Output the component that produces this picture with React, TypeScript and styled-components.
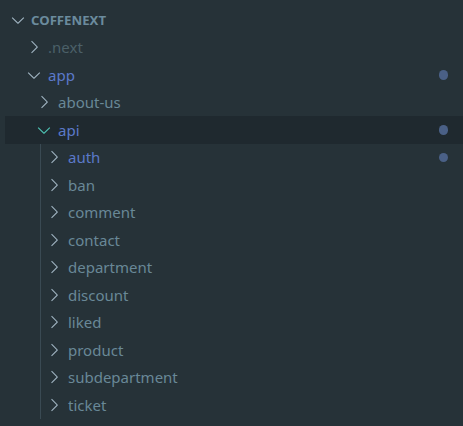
import React from "react";
import styled, { createGlobalStyle } from "styled-components";

const Global = createGlobalStyle`
  html, body { margin: 0; padding: 0; background: #263238; }
  body { width: 463px; height: 426px; overflow: hidden; }
`;

const Explorer = styled.div`
  box-sizing: border-box;
  width: 463px;
  height: 426px;
  background: #263238;
  padding-top: 6px;
  padding-left: 5px;
  font-family: "Noto Sans", "Open Sans", sans-serif;
`;

type Tone = "normal" | "modified" | "ignored";

const Row = styled.div<{ $depth: number; $selected?: boolean }>`
  position: relative;
  display: flex;
  align-items: center;
  height: 27.5px;
  padding-left: ${(p) => (p.$depth === 0 ? 3 : 9 + p.$depth * 10)}px;
  background: ${(p) => (p.$selected ? "#1f292f" : "transparent")};
`;

const Chevron = styled.span<{ $focus?: boolean }>`
  display: flex;
  width: 20px;
  height: 20px;
  flex: none;
  color: ${(p) => (p.$focus ? "#4ec3b4" : "#9fb3c0")};
`;

const Label = styled.span<{ $tone: Tone }>`
  margin-left: 4px;
  padding-top: 1px;
  font-size: 15px;
  line-height: 1;
  white-space: nowrap;
  color: ${(p) =>
    p.$tone === "modified" ? "#5b79c9" : p.$tone === "ignored" ? "#4b6068" : "#698897"};
`;

const Header = styled.span`
  margin-left: 3px;
  padding-top: 1px;
  font-size: 13.2px;
  font-weight: 700;
  color: #6b8b9d;
`;

const Dot = styled.span`
  position: absolute;
  right: 15px;
  top: 50%;
  width: 9.5px;
  height: 9.5px;
  margin-top: -4.75px;
  border-radius: 50%;
  background: #4a6086;
`;

const Group = styled.div<{ $guide: number }>`
  position: relative;
  &::before {
    content: "";
    position: absolute;
    left: ${(p) => p.$guide}px;
    top: 0;
    bottom: 0;
    width: 1px;
    background: #3a4a53;
  }
`;

const Down = () => (
  <svg width="20" height="20" viewBox="0 0 16 16" fill="currentColor">
    <path d="M7.976 10.072l4.357-4.357.62.618L8.284 11h-.618L3 6.333l.619-.618 4.357 4.357z" />
  </svg>
);
const Right = () => (
  <svg width="20" height="20" viewBox="0 0 16 16" fill="currentColor">
    <path d="M10.072 8.024L5.715 3.667l.618-.62L11 7.716v.618L6.333 13l-.618-.619 4.357-4.357z" />
  </svg>
);

const apiChildren = [
  { name: "auth", tone: "modified" as Tone, dot: true },
  { name: "ban" },
  { name: "comment" },
  { name: "contact" },
  { name: "department" },
  { name: "discount" },
  { name: "liked" },
  { name: "product" },
  { name: "subdepartment" },
  { name: "ticket" },
];

export default function App() {
  return (
    <>
      <Global />
      <Explorer>
        <Row $depth={0}>
          <Chevron>
            <Down />
          </Chevron>
          <Header>COFFENEXT</Header>
        </Row>
        <Row $depth={1}>
          <Chevron>
            <Right />
          </Chevron>
          <Label $tone="ignored">.next</Label>
        </Row>
        <Row $depth={1}>
          <Chevron>
            <Down />
          </Chevron>
          <Label $tone="modified">app</Label>
          <Dot />
        </Row>
        <Row $depth={2}>
          <Chevron>
            <Right />
          </Chevron>
          <Label $tone="normal">about-us</Label>
        </Row>
        <Row $depth={2} $selected>
          <Chevron $focus>
            <Down />
          </Chevron>
          <Label $tone="modified">api</Label>
          <Dot />
        </Row>
        <Group $guide={35}>
          {apiChildren.map((c) => (
            <Row key={c.name} $depth={3}>
              <Chevron>
                <Right />
              </Chevron>
              <Label $tone={c.tone ?? "normal"}>{c.name}</Label>
              {c.dot && <Dot />}
            </Row>
          ))}
        </Group>
      </Explorer>
    </>
  );
}
